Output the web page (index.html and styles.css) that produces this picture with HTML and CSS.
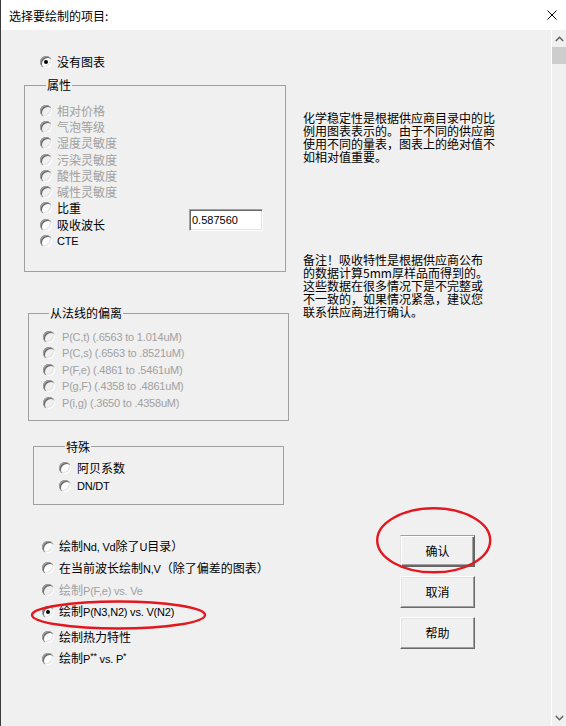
FILE: index.html
```html
<!DOCTYPE html>
<html lang="zh">
<head>
<meta charset="utf-8">
<title>选择要绘制的项目</title>
<link rel="stylesheet" href="styles.css">
</head>
<body>
<div class="window">
  <div class="titlebar">
    <span class="title">选择要绘制的项目:</span>
    <svg class="close" viewBox="0 0 10 10" width="10" height="10"><path d="M0.5 0.5 L9.5 9.5 M9.5 0.5 L0.5 9.5" stroke="#000" stroke-width="1" fill="none"/></svg>
  </div>
  <div class="body">
    <div class="content">
      <div class="opt top-opt"><span class="radio checked"></span><span>没有图表</span></div>

      <div class="row1">
        <div class="leftcol">
          <fieldset class="grp grp-attr">
            <legend>属性</legend>
            <div class="attr-inner">
              <div class="attr-list">
                <div class="opt dis"><span class="radio"></span><span>相对价格</span></div>
                <div class="opt dis"><span class="radio"></span><span>气泡等级</span></div>
                <div class="opt dis"><span class="radio"></span><span>湿度灵敏度</span></div>
                <div class="opt dis"><span class="radio"></span><span>污染灵敏度</span></div>
                <div class="opt dis"><span class="radio"></span><span>酸性灵敏度</span></div>
                <div class="opt dis"><span class="radio"></span><span>碱性灵敏度</span></div>
                <div class="opt"><span class="radio"></span><span>比重</span></div>
                <div class="opt"><span class="radio"></span><span>吸收波长</span></div>
                <div class="opt"><span class="radio"></span><span class="lat">CTE</span></div>
              </div>
              <input class="num" type="text" value="0.587560">
            </div>
          </fieldset>

          <fieldset class="grp grp-dev">
            <legend>从法线的偏离</legend>
            <div class="opt dis"><span class="radio"></span><span class="lat">P(C,t) (.6563 to 1.014uM)</span></div>
            <div class="opt dis"><span class="radio"></span><span class="lat">P(C,s) (.6563 to .8521uM)</span></div>
            <div class="opt dis"><span class="radio"></span><span class="lat">P(F,e) (.4861 to .5461uM)</span></div>
            <div class="opt dis"><span class="radio"></span><span class="lat">P(g,F) (.4358 to .4861uM)</span></div>
            <div class="opt dis"><span class="radio"></span><span class="lat">P(i,g) (.3650 to .4358uM)</span></div>
          </fieldset>

          <fieldset class="grp grp-special">
            <legend>特殊</legend>
            <div class="opt"><span class="radio"></span><span>阿贝系数</span></div>
            <div class="opt"><span class="radio"></span><span class="lat">DN/DT</span></div>
          </fieldset>
        </div>

        <div class="rightcol">
          <p class="note note1">化学稳定性是根据供应商目录中的比<br>例用图表表示的。由于不同的供应商<br>使用不同的量表，图表上的绝对值不<br>如相对值重要。</p>
          <p class="note note2">备注！吸收特性是根据供应商公布<br>的数据计算5mm厚样品而得到的。<br>这些数据在很多情况下是不完整或<br>不一致的，如果情况紧急，建议您<br>联系供应商进行确认。</p>
        </div>
      </div>

      <div class="row2">
        <div class="plotlist">
          <div class="opt"><span class="radio"></span><span>绘制<span class="lat">Nd, Vd</span>除了<span class="lat">U</span>目录）</span></div>
          <div class="opt"><span class="radio"></span><span>在当前波长绘制<span class="lat">N,V</span>（除了偏差的图表）</span></div>
          <div class="opt dis"><span class="radio"></span><span>绘制<span class="lat">P(F,e) vs. Ve</span></span></div>
          <div class="opt"><span class="radio checked"></span><span>绘制<span class="lat">P(N3,N2) vs. V(N2)</span></span></div>
          <div class="opt gap"><span class="radio"></span><span>绘制热力特性</span></div>
          <div class="opt"><span class="radio"></span><span>绘制<span class="lat">P<sup>**</sup> vs. P<sup>*</sup></span></span></div>
        </div>
        <div class="buttons">
          <button class="btn default">确认</button>
          <button class="btn">取消</button>
          <button class="btn">帮助</button>
        </div>
      </div>

      <svg class="mark mark-opt" width="177" height="32" viewBox="0 0 177 32"><ellipse cx="88.5" cy="16" rx="86.5" ry="13.5" fill="none" stroke="#e3171f" stroke-width="2.4"/></svg>
      <svg class="mark mark-ok" width="120" height="71" viewBox="0 0 120 71"><ellipse cx="59.7" cy="35.3" rx="56.5" ry="32" fill="none" stroke="#e3171f" stroke-width="2.4"/></svg>
    </div>

    <div class="scrollbar">
      <div class="sb-btn"><svg width="9" height="6" viewBox="0 0 9 6"><polyline points="0.8,5 4.5,1.3 8.2,5" fill="none" stroke="#606060" stroke-width="1.5"/></svg></div>
      <div class="sb-thumb"></div>
      <div class="sb-track"></div>
      <div class="sb-btn"><svg width="9" height="6" viewBox="0 0 9 6"><polyline points="0.8,1 4.5,4.7 8.2,1" fill="none" stroke="#606060" stroke-width="1.5"/></svg></div>
    </div>
  </div>
</div>
</body>
</html>
```

FILE: styles.css
```css
* { box-sizing: border-box; }
html, body { margin: 0; padding: 0; background: #f0f0f0; }
body {
  width: 566px;
  height: 726px;
  overflow: hidden;
  font-family: "Noto Sans CJK SC", "Liberation Sans", sans-serif;
  font-size: 12px;
  color: #000;
}
.window {
  height: 726px;
  border-left: 1px solid #3a3a3a;
  display: flex;
  flex-direction: column;
}
.titlebar {
  flex: none;
  height: 30px;
  background: #fff;
  display: flex;
  align-items: center;
  padding: 0 9px 0 8px;
}
.title { flex: 1; line-height: 16px; padding-top: 1px; }
.close { display: block; }

.body { flex: 1; display: flex; min-height: 0; }
.content { flex: 1; position: relative; padding-top: 24px; }

.opt {
  display: flex;
  align-items: center;
  height: 16px;
  white-space: nowrap;
  line-height: 14px;
}
.opt.dis { color: #a0a0a0; }
.radio {
  flex: none;
  position: relative;
  width: 12px;
  height: 12px;
  margin-right: 5px;
  border-radius: 50%;
  background: #fff;
  box-shadow: inset 1px 1px 0 #a0a0a0, inset 2px 2px 0 #696969,
              inset -1px -1px 0 #fff, inset -2px -2px 0 #e3e3e3;
}
.opt.dis .radio { background: #f0f0f0; }
.radio.checked::after {
  content: "";
  position: absolute;
  left: 4px;
  top: 4px;
  width: 4px;
  height: 4px;
  border-radius: 50%;
  background: #000;
}
.lat {
  font-family: "Liberation Sans", sans-serif;
  font-size: 11px;
  letter-spacing: -0.2px;
}
.lat sup { font-size: 9px; vertical-align: 4px; line-height: 0; }

.top-opt { padding-left: 39px; }

.row1 { display: flex; align-items: flex-start; margin-top: 7px; }
.leftcol { flex: none; width: 290px; }
.rightcol { padding-left: 12px; }

.grp {
  margin: 0;
  min-width: 0;
  border: 1px solid #a0a0a0;
}
.grp legend {
  padding: 0 1px;
  margin-left: 6px;
  height: 16px;
  line-height: 16px;
}
.grp-attr { margin-left: 23px; width: 262px; padding: 9.5px 0 22px 15px; }
.grp-attr .opt { height: 16.3px; }
.attr-inner { display: flex; align-items: flex-start; }
.attr-list { flex: none; width: 120px; }
.num {
  margin: 106.5px 0 0 29px;
  width: 74px;
  height: 22px;
  padding: 0 0 0 2px;
  background: #fff;
  border: 1px solid;
  border-color: #a0a0a0 #fff #fff #a0a0a0;
  box-shadow: inset 1px 1px 0 #696969, inset -1px -1px 0 #e3e3e3;
  font-family: "Liberation Sans", sans-serif;
  font-size: 11px;
  color: #000;
  outline: none;
}

.grp-dev { margin: 33px 0 0 27px; width: 261px; padding: 7.5px 0 9px 14px; }
.grp-dev .opt { height: 16.5px; }
.grp-dev .radio { margin-right: 7px; }

.grp-special { margin: 17.5px 0 0 32px; width: 251px; padding: 4px 0 9px 25px; }
.grp-special .opt { height: 18.4px; }
.grp-special .radio { margin-right: 6px; }

.note { margin: 0; white-space: nowrap; line-height: 13px; }
.note1 { margin-top: 34px; }
.note2 { margin-top: 90px; }

.row2 { display: flex; margin-top: 29.5px; }
.plotlist { flex: none; width: 399px; padding: 1px 0 0 41px; }
.plotlist .opt { height: 21.7px; }
.plotlist .opt.gap { margin-top: 3.3px; }

.buttons { display: flex; flex-direction: column; gap: 9px; }
.btn {
  width: 75px;
  height: 32px;
  margin: 0;
  padding: 0;
  background: #f0f0f0;
  border: 1px solid;
  border-color: #fff #696969 #696969 #fff;
  box-shadow: inset -1px -1px 0 #a0a0a0, inset 1px 1px 0 #e3e3e3;
  font-family: "Noto Sans CJK SC", sans-serif;
  font-size: 12px;
  color: #000;
  display: flex;
  align-items: center;
  justify-content: center;
}
.btn.default {
  border-color: #a0a0a0 #646464 #646464 #e3e3e3;
  box-shadow: inset 1px 1px 0 #fff, inset -1px -1px 0 #696969, inset -2px -2px 0 #a0a0a0;
}

.mark { position: absolute; display: block; }
.mark-opt { left: 29px; top: 569px; }
.mark-ok { left: 373px; top: 475px; }

.scrollbar {
  flex: none;
  width: 15px;
  border-left: 1px solid #fff;
  background: #f0f0f0;
  display: flex;
  flex-direction: column;
}
.sb-btn {
  flex: none;
  height: 17px;
  display: flex;
  align-items: center;
  justify-content: center;
}
.sb-btn svg { display: block; }
.sb-thumb { flex: none; height: 17px; background: #cdcdcd; }
.sb-track { flex: 1; }
```
